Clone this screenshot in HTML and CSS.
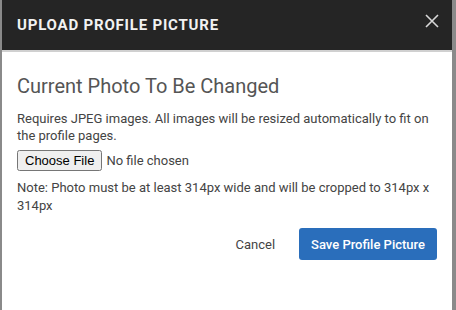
FILE: index.html
```html
<!DOCTYPE html>
<html lang="en">
<head>
    <meta charset="UTF-8">
    <meta name="viewport" content="width=device-width, initial-scale=1.0">
    <title>Upload Profile Picture</title>
    <link rel="stylesheet" href="styles.css">
</head>
<body>
    <div class="backdrop">
        <div class="modal">
            <header class="modal-header">
                <h2>Upload Profile Picture</h2>
                <button class="close-btn" aria-label="Close">
                    <svg width="14" height="14" viewBox="0 0 14 14">
                        <path d="M1 1 L13 13 M13 1 L1 13" stroke="#d8d8d8" stroke-width="1.6" fill="none"/>
                    </svg>
                </button>
            </header>
            <div class="modal-body">
                <h3>Current Photo To Be Changed</h3>
                <p>Requires JPEG images. All images will be resized automatically to fit on the profile pages.</p>
                <input type="file" class="file-input" accept="image/jpeg">
                <p class="note">Note: Photo must be at least 314px wide and will be cropped to 314px x 314px</p>
                <div class="actions">
                    <button class="cancel-btn">Cancel</button>
                    <button class="save-btn">Save Profile Picture</button>
                </div>
            </div>
        </div>
    </div>
</body>
</html>
```

FILE: styles.css
```css
html, body {
    margin: 0;
    padding: 0;
    height: 100%;
}
body {
    font-family: Roboto, Arial, sans-serif;
    background-color: #8a8a8a;
    color: #444;
}
.backdrop {
    padding: 0 4px 0 2px;
    height: 100%;
}
.modal {
    background-color: #fff;
    height: 100%;
}
.modal-header {
    display: flex;
    align-items: center;
    justify-content: space-between;
    height: 50px;
    padding: 0 13px 0 15px;
    background-color: #252525;
    border-bottom: 2px solid #d0d0d0;
}
.modal-header h2 {
    margin: 0;
    font-size: 15px;
    font-weight: 700;
    letter-spacing: 0.8px;
    text-transform: uppercase;
    color: #f2f2f2;
}
.close-btn {
    background: none;
    border: none;
    padding: 0;
    display: flex;
    cursor: pointer;
    margin-top: -9px;
}
.modal-body {
    padding: 22px 15px 0 15px;
}
.modal-body h3 {
    margin: 0 0 12px 0;
    font-size: 20px;
    font-weight: 400;
    color: #555;
}
.modal-body p {
    margin: 0 0 6px 0;
    font-size: 13px;
    line-height: 17px;
}
.file-input {
    font-family: Roboto, Arial, sans-serif;
    font-size: 13px;
    color: #444;
    margin: 0 0 8px 0;
}
.modal-body .note {
    line-height: 18px;
}
.actions {
    display: flex;
    justify-content: flex-end;
    align-items: center;
    gap: 24px;
    margin-top: 13px;
}
.cancel-btn {
    background: none;
    border: none;
    font-family: Roboto, Arial, sans-serif;
    font-size: 13px;
    color: #444;
    padding: 0;
    cursor: pointer;
}
.save-btn {
    background-color: #2a6ebb;
    color: #fff;
    border: none;
    border-radius: 3px;
    padding: 0 12px;
    height: 32px;
    font-family: Roboto, Arial, sans-serif;
    font-size: 13px;
    font-weight: 500;
    cursor: pointer;
}
```
